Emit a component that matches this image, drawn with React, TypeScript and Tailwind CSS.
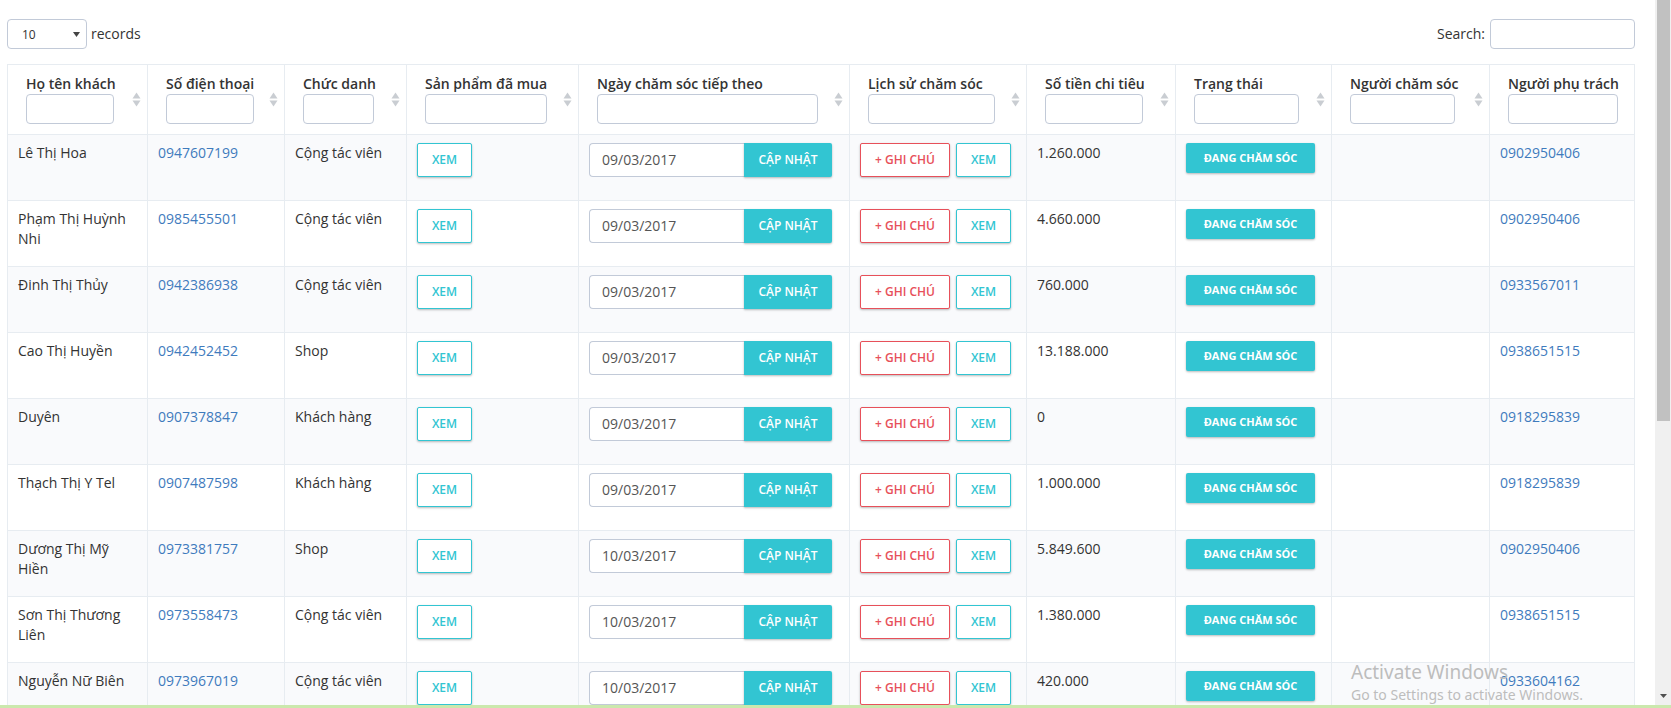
const COLS =
  "grid grid-cols-[140px_137px_122px_172px_271px_177px_149px_156px_158px_145px]";
const CELL = "h-[66px] border-r border-b border-[#e7ecf1] px-[10px] pt-[8px]";
const BTN_SHADOW = "shadow-[0_1px_3px_rgba(0,0,0,0.1),0_1px_2px_rgba(0,0,0,0.18)]";

const HEADERS = [
  { label: "Họ tên khách", input: "w-[88px]", sort: true },
  { label: "Số điện thoại", input: "w-[88px]", sort: true },
  { label: "Chức danh", input: "w-[71px]", sort: true },
  { label: "Sản phẩm đã mua", input: "w-[122px]", sort: true },
  { label: "Ngày chăm sóc tiếp theo", input: "w-[221px]", sort: true },
  { label: "Lịch sử chăm sóc", input: "w-[127px]", sort: true },
  { label: "Số tiền chi tiêu", input: "w-[98px]", sort: true },
  { label: "Trạng thái", input: "w-[105px]", sort: true },
  { label: "Người chăm sóc", input: "w-[105px]", sort: true },
  { label: "Người phụ trách", input: "w-[110px]", sort: false },
];

const CUSTOMERS = [
  { name: "Lê Thị Hoa", phone: "0947607199", title: "Cộng tác viên", date: "09/03/2017", spent: "1.260.000", owner: "0902950406" },
  { name: "Phạm Thị Huỳnh Nhi", phone: "0985455501", title: "Cộng tác viên", date: "09/03/2017", spent: "4.660.000", owner: "0902950406" },
  { name: "Đinh Thị Thủy", phone: "0942386938", title: "Cộng tác viên", date: "09/03/2017", spent: "760.000", owner: "0933567011" },
  { name: "Cao Thị Huyền", phone: "0942452452", title: "Shop", date: "09/03/2017", spent: "13.188.000", owner: "0938651515" },
  { name: "Duyên", phone: "0907378847", title: "Khách hàng", date: "09/03/2017", spent: "0", owner: "0918295839" },
  { name: "Thạch Thị Y Tel", phone: "0907487598", title: "Khách hàng", date: "09/03/2017", spent: "1.000.000", owner: "0918295839" },
  { name: "Dương Thị Mỹ Hiền", phone: "0973381757", title: "Shop", date: "10/03/2017", spent: "5.849.600", owner: "0902950406" },
  { name: "Sơn Thị Thương Liên", phone: "0973558473", title: "Cộng tác viên", date: "10/03/2017", spent: "1.380.000", owner: "0938651515" },
  { name: "Nguyễn Nữ Biên", phone: "0973967019", title: "Cộng tác viên", date: "10/03/2017", spent: "420.000", owner: "0933604162" },
];

function SortIcon() {
  return (
    <svg width="9" height="17" viewBox="0 0 9 17" className="ml-auto shrink-0 self-center">
      <polygon points="0.5,7.5 4.5,1.5 8.5,7.5" fill="#c9cdd2" />
      <polygon points="0.5,9.5 4.5,15.5 8.5,9.5" fill="#c9cdd2" />
    </svg>
  );
}

function OutlineButton({ label, tone }: { label: string; tone: "cyan" | "red" }) {
  const color =
    tone === "cyan"
      ? "border-[#32c5d2] text-[#32c5d2] w-[55px]"
      : "border-[#e7505a] text-[#e7505a] w-[90px]";
  return (
    <button
      className={`flex h-[34px] items-center justify-center rounded-[2px] border bg-white text-[12px] font-semibold ${color} ${BTN_SHADOW}`}
    >
      {label}
    </button>
  );
}

function Scrollbar() {
  return (
    <div className="flex w-[16px] shrink-0 flex-col bg-[#f0f0f0] pl-[2px] pr-[1px]">
      <div className="h-[421px] bg-[#c1c1c1]" />
      <div className="flex flex-1 items-end justify-center pb-[7px]">
        <svg width="7" height="4" viewBox="0 0 7 4">
          <polygon points="0,0 7,0 3.5,4" fill="#505050" />
        </svg>
      </div>
    </div>
  );
}

export default function App() {
  return (
    <div className="relative flex h-[708px] w-full flex-col overflow-hidden bg-white font-['Open_Sans',sans-serif] text-[14px] leading-5 text-[#333]">
      <div className="flex min-h-0 flex-1">
        <main className="min-w-0 flex-1 overflow-hidden pl-[7px] pr-[20px] pt-[19px]">
          <div className="flex h-[30px] w-[1628px] items-center justify-between">
            <div className="flex items-center">
              <div className="flex h-[30px] w-[80px] items-center justify-between rounded-[4px] border border-[#c2cad8] pl-[14px] pr-[6px] text-[12px]">
                <span className="pt-[2px]">10</span>
                <svg width="7" height="5" viewBox="0 0 7 5">
                  <polygon points="0,0 7,0 3.5,5" fill="#444" />
                </svg>
              </div>
              <span className="ml-[4px]">records</span>
            </div>
            <div className="flex items-center">
              <span>Search:</span>
              <div className="ml-[5px] h-[30px] w-[145px] rounded-[4px] border border-[#c2cad8]" />
            </div>
          </div>

          <div className="mt-[15px] w-[1628px] border-t border-l border-[#e7ecf1]">
            <div className={COLS}>
              {HEADERS.map((h) => (
                <div
                  key={h.label}
                  className="flex h-[70px] items-start border-r border-b border-[#e7ecf1] pt-[9px] pb-[10px] pl-[18px] pr-[6px]"
                >
                  <div className="flex flex-col">
                    <span className="whitespace-nowrap font-semibold">{h.label}</span>
                    <div className={`h-[30px] rounded-[4px] border border-[#c2cad8] ${h.input}`} />
                  </div>
                  {h.sort && <SortIcon />}
                </div>
              ))}
            </div>

            {CUSTOMERS.map((c, i) => (
              <div key={c.phone} className={`${COLS} ${i % 2 === 0 ? "bg-[#f9fafc]" : "bg-white"}`}>
                <div className={CELL}>{c.name}</div>
                <div className={CELL}>
                  <a className="text-[#3f7bbd]">{c.phone}</a>
                </div>
                <div className={CELL}>{c.title}</div>
                <div className={CELL}>
                  <OutlineButton label="XEM" tone="cyan" />
                </div>
                <div className={CELL}>
                  <div className="flex h-[34px]">
                    <div className="flex w-[155px] items-center rounded-l-[4px] border border-r-0 border-[#c2cad8] bg-white pl-[12px] text-[#555]">
                      {c.date}
                    </div>
                    <button
                      className={`w-[88px] rounded-r-[2px] bg-[#32c5d2] text-[12px] font-semibold text-white ${BTN_SHADOW}`}
                    >
                      CẬP NHẬT
                    </button>
                  </div>
                </div>
                <div className={CELL}>
                  <div className="flex gap-[6px]">
                    <OutlineButton label="+ GHI CHÚ" tone="red" />
                    <OutlineButton label="XEM" tone="cyan" />
                  </div>
                </div>
                <div className={CELL}>{c.spent}</div>
                <div className={CELL}>
                  <button
                    className={`h-[30px] w-[129px] rounded-[2px] bg-[#32c5d2] text-[11px] font-bold text-white ${BTN_SHADOW}`}
                  >
                    ĐANG CHĂM SÓC
                  </button>
                </div>
                <div className={CELL} />
                <div className={CELL}>
                  <a className="text-[#3f7bbd]">{c.owner}</a>
                </div>
              </div>
            ))}
          </div>
        </main>
        <Scrollbar />
      </div>
      <div className="h-[3px] shrink-0 bg-[#cbe8ad]" />

      <div className="pointer-events-none absolute left-[1351px] top-[659px] font-['Noto_Sans',sans-serif] text-[#bdbdbd]">
        <div className="text-[19px] leading-[26px]">Activate Windows</div>
        <div className="text-[14px] leading-[20px]">Go to Settings to activate Windows.</div>
      </div>
    </div>
  );
}
